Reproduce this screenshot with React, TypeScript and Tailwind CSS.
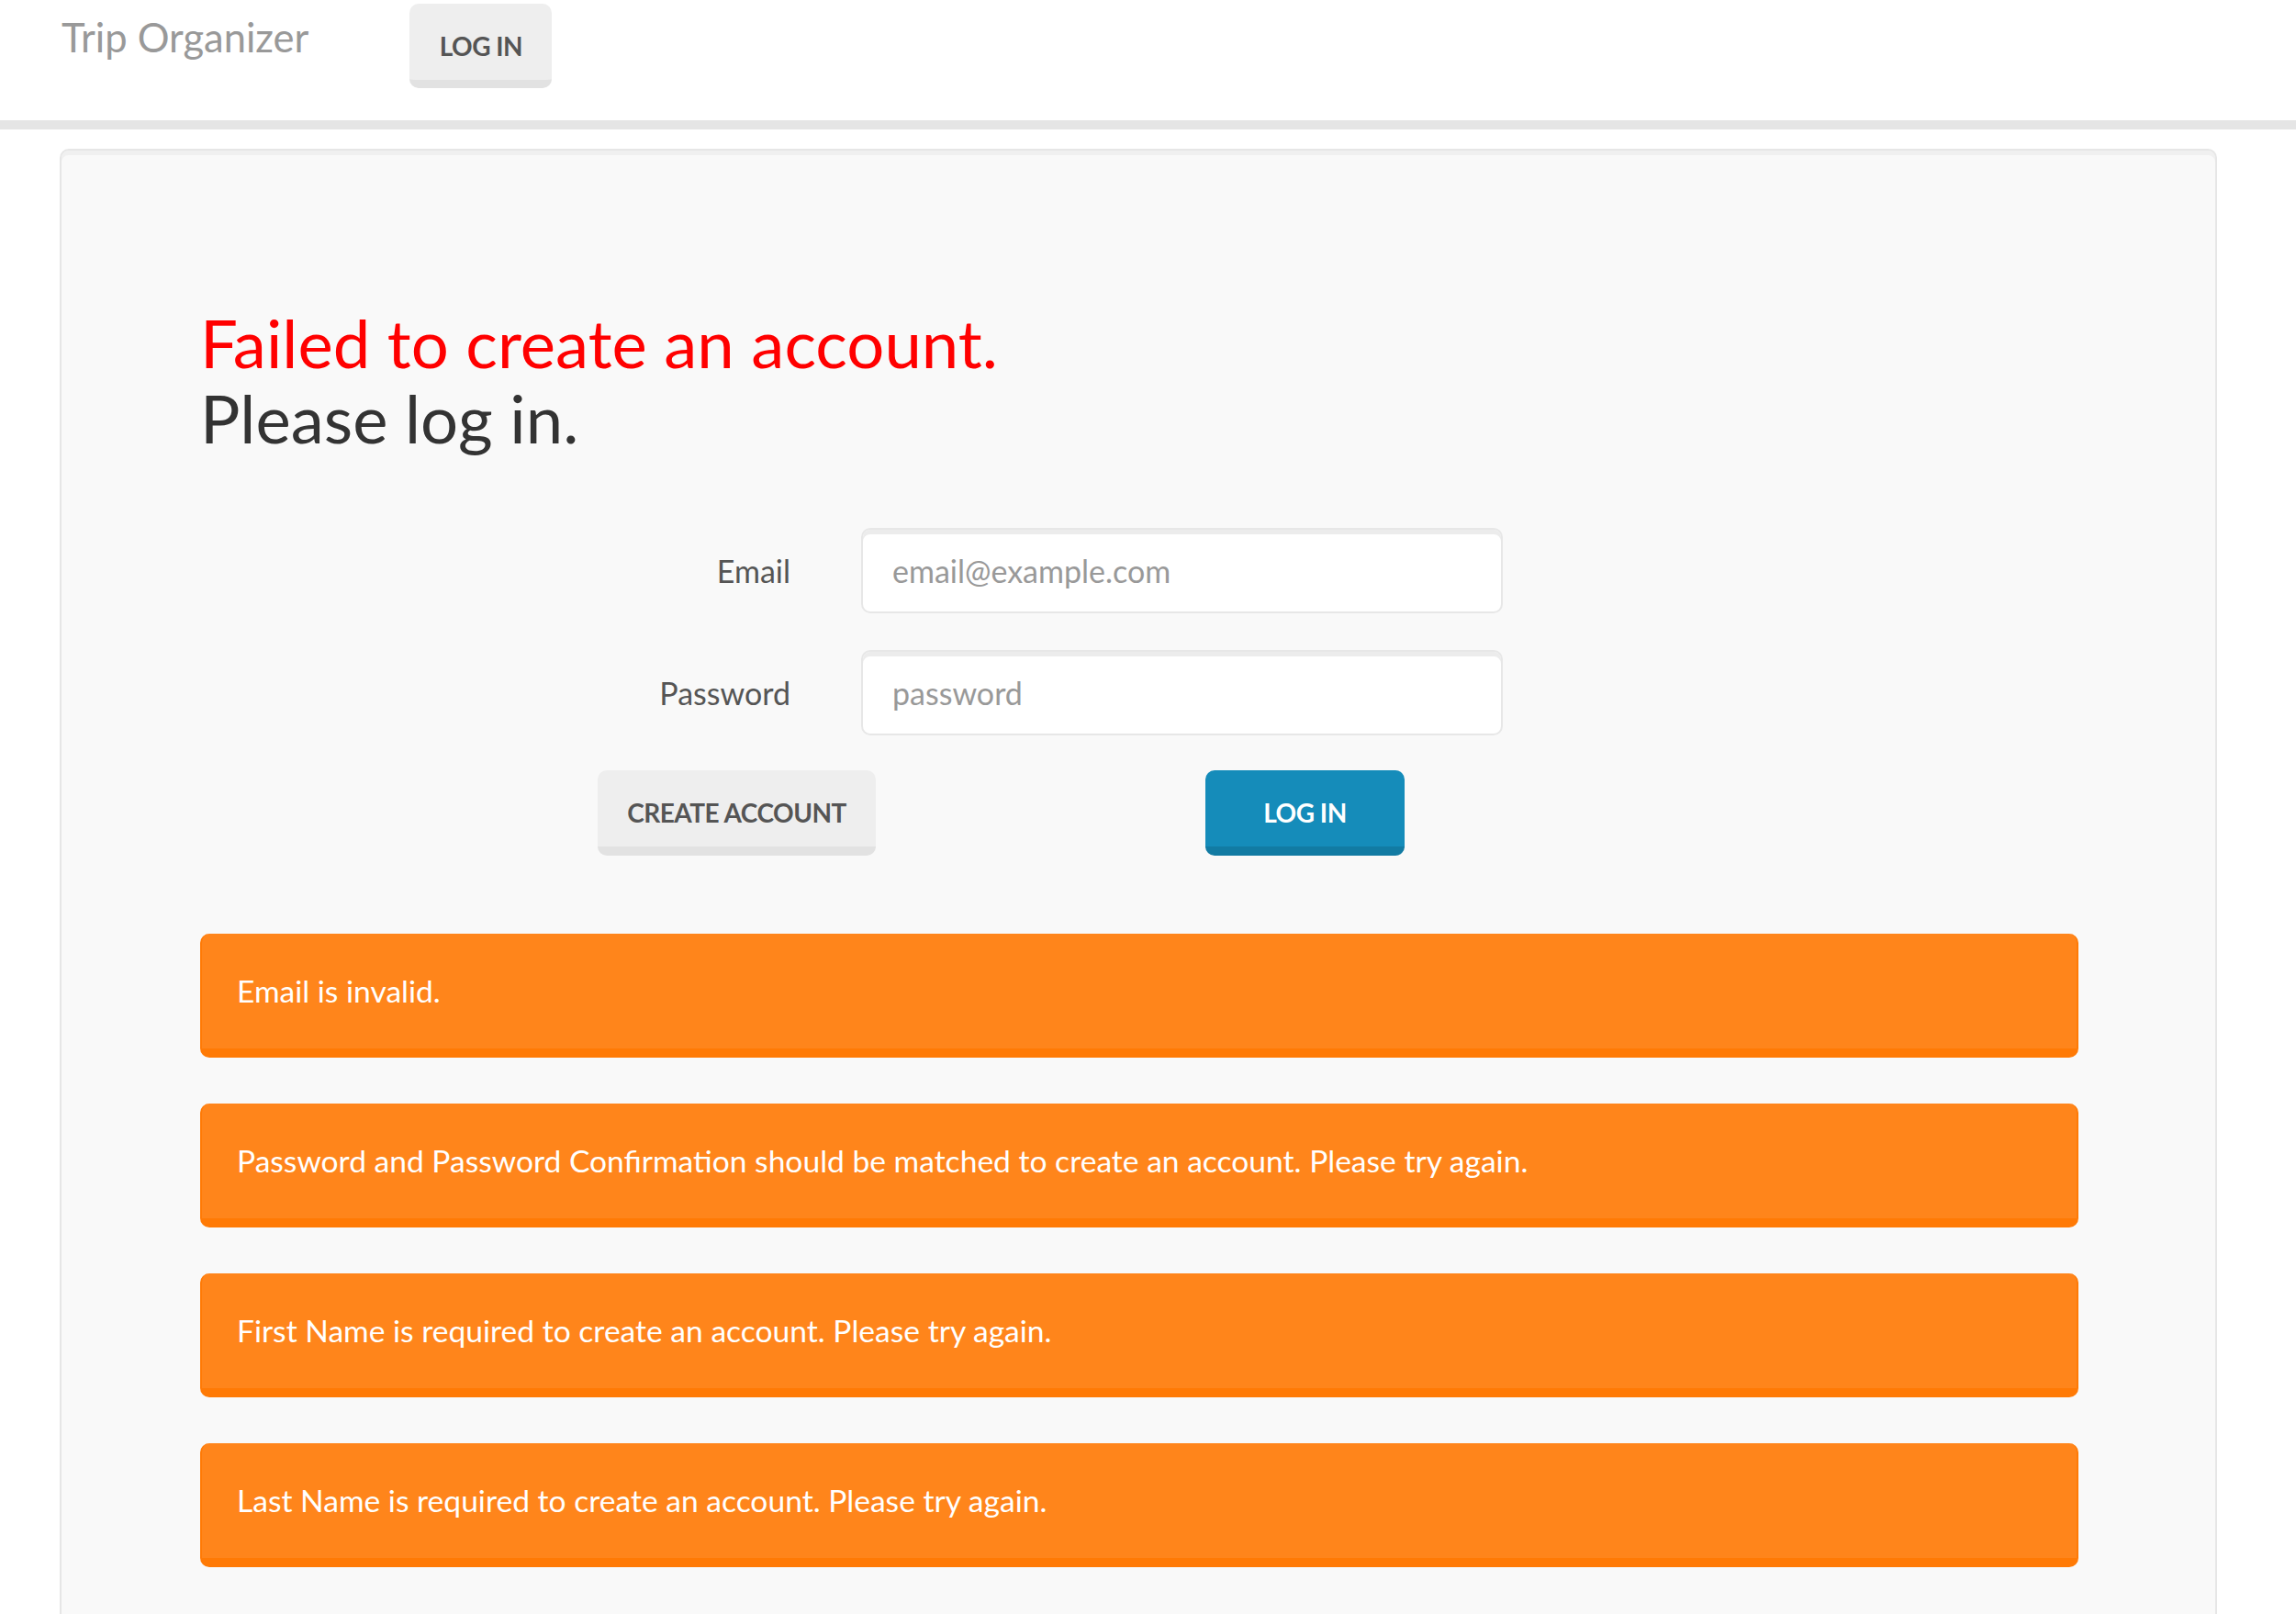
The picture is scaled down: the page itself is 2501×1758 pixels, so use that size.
const errors = [
  "Email is invalid.",
  "Password and Password Confirmation should be matched to create an account. Please try again.",
  "First Name is required to create an account. Please try again.",
  "Last Name is required to create an account. Please try again.",
]

function FormRow({ label, placeholder, type }: { label: string; placeholder: string; type: string }) {
  return (
    <div className="flex items-center">
      <label className="w-[643px] text-right text-[34px] text-[#555]">{label}</label>
      <input
        type={type}
        placeholder={placeholder}
        className="ml-[77px] h-[93px] w-[699px] rounded-[10px] border-2 border-[#e7e7e7] bg-white px-[32px] text-[34px] text-[#555] shadow-[inset_0_5px_0_rgba(0,0,0,0.075)] outline-none placeholder:text-[#999]"
      />
    </div>
  )
}

export default function App() {
  return (
    <div className="min-h-screen bg-white font-['Lato',sans-serif] text-[#555]">
      <header className="flex h-[141px] items-start border-b-[10px] border-[#e5e5e5]">
        <span className="ml-[67px] mt-[15px] text-[43.5px] leading-[50px] text-[#999]">Trip Organizer</span>
        <button className="ml-[110px] mt-[4px] flex h-[92px] w-[155px] items-center justify-center rounded-[10px] border-b-[9px] border-[#e2e2e2] bg-[#eeeeee] pt-[8px] text-[28px] font-bold uppercase tracking-[-0.5px] text-[#555]">
          Log in
        </button>
      </header>

      <main className="ml-[65px] mt-[21px] w-[2350px] rounded-[10px] border-2 border-[#e6e6e6] bg-[#f9f9f9] pb-[120px] pl-[151px] pr-[149px] pt-[168px] shadow-[inset_0_5px_0_rgba(0,0,0,0.035)]">
        <h2 className="text-[72.5px] leading-[82px]">
          <span className="block text-[#ff0000]">Failed to create an account.</span>
          <span className="block text-[#333]">Please log in.</span>
        </h2>

        <form className="mt-[79px] flex flex-col gap-[40px]">
          <FormRow label="Email" placeholder="email@example.com" type="email" />
          <FormRow label="Password" placeholder="password" type="password" />
        </form>

        <div className="mt-[38px] flex">
          <button className="ml-[433px] flex h-[93px] w-[303px] items-center justify-center rounded-[10px] border-b-[10px] border-[#e2e2e2] bg-[#eeeeee] pt-[8px] text-[28px] font-bold uppercase tracking-[-0.5px] text-[#555]">
            Create account
          </button>
          <button className="ml-[359px] flex h-[93px] w-[217px] items-center justify-center rounded-[10px] border-b-[10px] border-[#127ba3] bg-[#158cba] pt-[8px] text-[28px] font-bold uppercase tracking-[-0.5px] text-white">
            Log in
          </button>
        </div>

        <div className="mt-[85px] flex flex-col gap-[50px]">
          {errors.map((msg, i) => (
            <div
              key={i}
              className="flex h-[135px] items-center rounded-[10px] border-x-2 border-b-[10px] border-[#ff7a05] bg-[#ff851b] pl-[38px] text-[33.6px] text-white"
            >
              {msg}
            </div>
          ))}
        </div>
      </main>
    </div>
  )
}
